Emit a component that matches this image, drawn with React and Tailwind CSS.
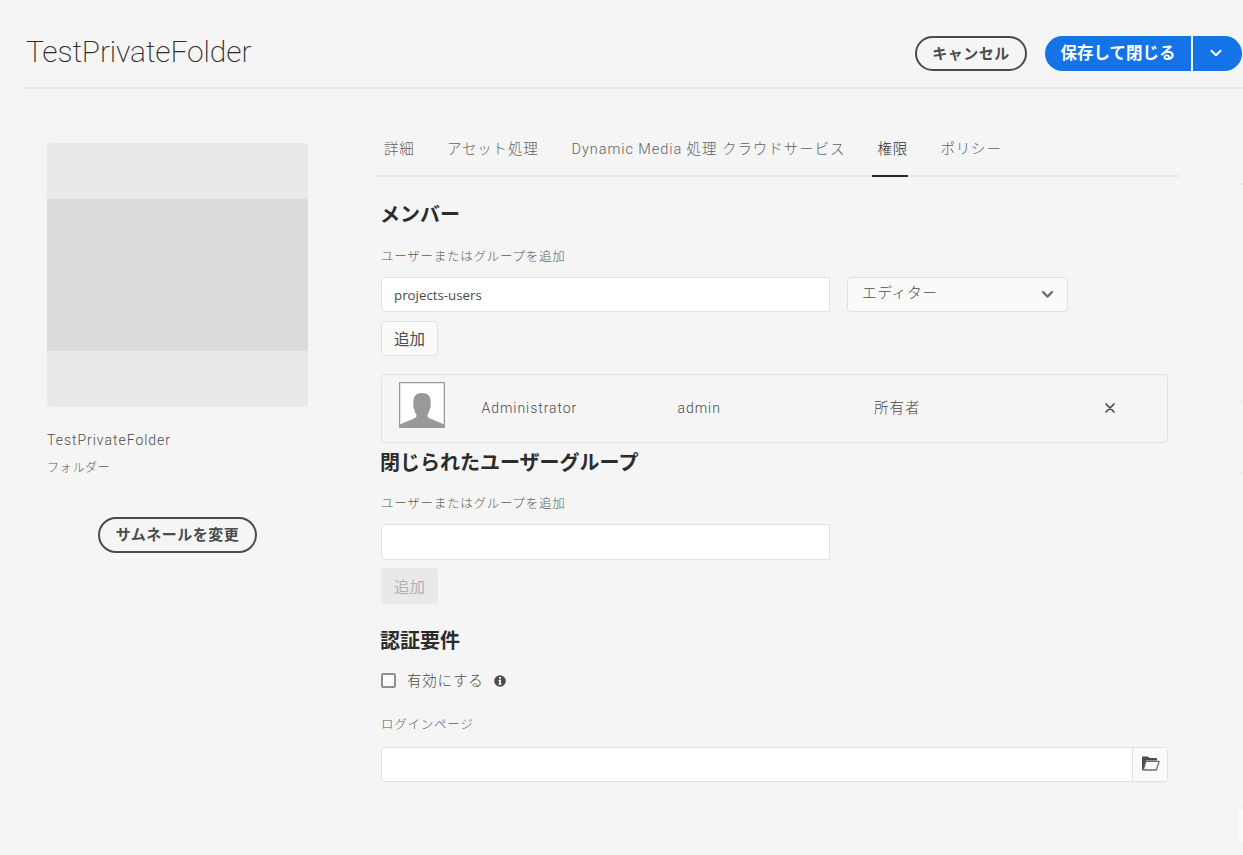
import React from "react";

const latin = "font-[Roboto,'Noto_Sans_CJK_JP',sans-serif]";
const jp = "font-['Noto_Sans_CJK_JP',sans-serif]";

const Line = ({ className, children }) => (
  <div className={`flex items-center whitespace-nowrap ${className}`}>{children}</div>
);

const Heading = ({ className = "", children }) => (
  <h2 className={`-ml-px flex h-7 items-center whitespace-nowrap text-[20px] font-bold text-[#2c2c2c] ${jp} ${className}`}>{children}</h2>
);

const FieldLabel = ({ className = "", children }) => (
  <Line className={`h-5 text-[12.5px] font-light tracking-[0.75px] text-[#5a5a5a] ${jp} ${className}`}>{children}</Line>
);

const tabs = [
  { label: "詳細", box: "w-[63px] tracking-[0.8px]" },
  { label: "アセット処理", box: "w-[124px] tracking-[0.8px]" },
  { label: "Dynamic Media 処理 クラウドサービス", box: "w-[301px] pl-[0.5px] tracking-[0.94px]" },
  { label: "権限", box: "w-[36px] mr-[32px] pl-[5.5px] tracking-[0.8px]", active: true },
  { label: "ポリシー", box: "w-[70px] pl-[0.5px] tracking-[0.8px]" },
];

function Header() {
  return (
    <header className="ml-6 flex h-[89px] shrink-0 border-b-2 border-[#e9e9e9]">
      <h1 className="mt-8 h-10 flex-1 pl-[2px] text-[30px] leading-10 font-[200] tracking-[-0.13px] text-[#2c2c2c] font-[Roboto,sans-serif]">
        TestPrivateFolder
      </h1>
      <div className={`mt-9 flex h-[35px] text-[15px] font-bold ${jp}`}>
        <button className="mr-[18px] flex w-28 items-center justify-center rounded-full border-2 border-[#4b4b4b] tracking-[0.5px] whitespace-nowrap text-[#4b4b4b]">
          キャンセル
        </button>
        <button className="mr-[2px] flex w-[146px] items-center justify-center rounded-l-full bg-[#1473e6] pb-[2px] text-[16.5px] whitespace-nowrap text-white">
          保存して閉じる
        </button>
        <button className="mr-px flex w-[49px] items-center justify-center rounded-r-full bg-[#1473e6] pr-[3px] pb-px">
          <svg width="12" height="8" viewBox="0 0 12 8" fill="none" stroke="#fff" strokeWidth="2" strokeLinecap="round" strokeLinejoin="round">
            <path d="M1.500 1.800 6 6.200l4.500-4.400" />
          </svg>
        </button>
      </div>
    </header>
  );
}

function Sidebar() {
  return (
    <aside className="w-[374px] shrink-0 pt-[54px] pl-[47px]">
      <div className="h-[264px] w-[261px] rounded bg-[#e9e9e9] pt-14">
        <div className="h-[152px] bg-[#dcdcdc]" />
      </div>
      <Line className={`mt-[22px] h-[22px] text-[14px] font-light tracking-[0.98px] text-[#4b4b4b] ${latin}`}>TestPrivateFolder</Line>
      <Line className={`mt-2 h-4 text-[12px] font-light tracking-[0.7px] text-[#5a5a5a] ${jp}`}>フォルダー</Line>
      <button className={`mt-[42px] ml-[51px] flex h-9 w-[159px] items-center justify-center rounded-full border-2 border-[#4b4b4b] pb-[2px] text-[15px] font-bold tracking-[0.5px] whitespace-nowrap text-[#4b4b4b] ${jp}`}>
        サムネールを変更
      </button>
    </aside>
  );
}

function Tabs() {
  return (
    <nav className={`flex h-[88px] border-b-2 border-[#e9e9e9] pl-[10px] text-[14.5px] font-light text-[#626262] ${latin}`}>
      {tabs.map((t) => (
        <div
          key={t.label}
          className={`-mb-[2px] flex shrink-0 items-start border-b-2 pt-[49px] leading-6 whitespace-nowrap ${t.box} ${t.active ? "border-[#2c2c2c] text-[#2c2c2c]" : "border-transparent"}`}
        >
          {t.label}
        </div>
      ))}
    </nav>
  );
}

function Avatar() {
  return (
    <svg className="mb-[3px] ml-[17px] shrink-0" width="46" height="46" viewBox="0 0 46 46">
      <rect x="0.5" y="0.5" width="45" height="45" fill="#fff" stroke="#999" />
      <rect x="1.5" y="1.5" width="43" height="43" fill="none" stroke="#e4e4e4" />
      <path fill="#999" d="M1 45.500v-3c5-2.700 10-4.200 14-6 2.500-1.200 3-2.200 2.300-4-1.200-1.600-1.700-3.200-1.900-5.200-1.300-1.200-1.500-4-.9-5.300-.9-7 1.800-11 8.500-11s9.400 4 8.500 11c.6 1.300.4 4.100-.9 5.300-.2 2-.7 3.600-1.900 5.200-.7 1.800-.2 2.800 2.300 4 4 1.800 9 3.300 14 6v3z" />
    </svg>
  );
}

function Permissions() {
  return (
    <section className="flex flex-col pl-[7px]">
      <Heading className="mt-[23px]">メンバー</Heading>
      <FieldLabel className="mt-[18px]">ユーザーまたはグループを追加</FieldLabel>
      <div className="mt-[11px] flex h-[35px] gap-[17px]">
        <div className="flex w-[449px] items-center rounded-l border border-[#e1e1e1] bg-white pt-[2px] pl-3 text-[13.3px] text-[#4b4b4b] font-['Open_Sans',sans-serif]">
          projects-users
        </div>
        <div className={`flex w-[221px] items-center justify-between rounded border border-[#e1e1e1] bg-[#fafafa] pr-[13px] pl-[14px] text-[14.5px] font-light tracking-[0.9px] text-[#4b4b4b] ${jp}`}>
          <span className="pb-[5px]">エディター</span>
          <svg width="13" height="9" viewBox="0 0 13 9" fill="none" stroke="#6e6e6e" strokeWidth="2.300" strokeLinecap="round" strokeLinejoin="round">
            <path d="M2 2l4.500 4.600L11 2" />
          </svg>
        </div>
      </div>
      <button className={`mt-[9px] flex h-[35px] w-[57px] items-center justify-center rounded border border-[#e1e1e1] bg-[#fafafa] text-[15.5px] text-[#4b4b4b] ${jp}`}>追加</button>
      <div className={`mt-[18px] flex h-[69px] w-[787px] items-center rounded border border-[#e1e1e1] pb-[5px] text-[14px] font-light tracking-[0.95px] text-[#4b4b4b] ${latin}`}>
        <Avatar />
        <span className="mt-[5px] ml-[36.500px] w-[196px]">Administrator</span>
        <span className="mt-[5px] w-[196.500px]">admin</span>
        <span className="mt-[6px] w-[231px] text-[14.5px]">所有者</span>
        <svg className="mt-[3px]" width="10" height="10" viewBox="0 0 10 10" stroke="#4b4b4b" strokeWidth="1.700" strokeLinecap="round">
          <path d="M1 1l8 8M9 1L1 9" />
        </svg>
      </div>
      <Heading className="mt-[5px]">閉じられたユーザーグループ</Heading>
      <FieldLabel className="mt-[17px]">ユーザーまたはグループを追加</FieldLabel>
      <div className="mt-[11px] h-9 w-[449px] rounded-l border border-[#e1e1e1] bg-white" />
      <button className={`mt-2 flex h-9 w-[57px] items-center justify-center rounded bg-[#e9e9e9] pt-px text-[15.5px] text-[#b3b3b3] ${jp}`}>追加</button>
      <Heading className="mt-[22px]">認証要件</Heading>
      <div className="mt-[15px] flex h-[22px] items-center">
        <div className="h-[15px] w-[15px] rounded-[2px] border-2 border-[#8e8e8e] bg-[#fafafa]" />
        <span className={`ml-[11px] w-[87px] text-[14.5px] font-light tracking-[0.8px] whitespace-nowrap text-[#4b4b4b] ${jp}`}>有効にする</span>
        <svg className="mt-px -ml-[0.5px]" width="12" height="12" viewBox="0 0 12 12">
          <circle cx="6" cy="6" r="5.800" fill="#4b4b4b" />
          <path fill="#f5f5f5" d="M5 2h2v1.800H5zM4.400 4.800H7V8.600h.7V9.800H4.400V8.600H5V6h-.6z" />
        </svg>
      </div>
      <FieldLabel className="mt-[23px]">ログインページ</FieldLabel>
      <div className="mt-[13px] flex h-[35px] w-[787px] overflow-hidden rounded border border-[#e1e1e1] bg-white">
        <div className="flex-1" />
        <div className="flex w-[35px] items-center justify-center border-l border-[#e1e1e1] bg-[#fafafa] pb-[2px] pl-[2px]">
          <svg width="18" height="15" viewBox="0 0 18 15">
            <path fill="#4b4b4b" d="M0 14V1.200Q0 .5.700.500H6L7.500 2h6.800q.7 0 .7.700V4.500H4L1.500 14z" />
            <path fill="#fafafa" stroke="#6e6e6e" strokeWidth="1.300" strokeLinejoin="round" d="M4 5.300h13.200L14.300 14H1.200z" />
          </svg>
        </div>
      </div>
    </section>
  );
}

function EdgePanel() {
  return (
    <div className="flex w-1 shrink-0 flex-col overflow-hidden pt-[94px]">
      <div className="h-[2px] bg-[#e9e9e9]" />
      <div className="mt-[215px] h-[75px] rounded-r border-y border-[#e1e1e1]" />
      <div className="mt-[331px] h-[39px] rounded-r border-y border-[#e1e1e1] bg-[#fafafa]" />
    </div>
  );
}

export default function App() {
  return (
    <div className="flex h-[855px] w-[1243px] flex-col overflow-hidden bg-[#f5f5f5]">
      <Header />
      <div className="flex flex-1">
        <Sidebar />
        <main className="w-[806px] shrink-0">
          <Tabs />
          <Permissions />
        </main>
        <div className="w-[59px] shrink-0" />
        <EdgePanel />
      </div>
    </div>
  );
}
